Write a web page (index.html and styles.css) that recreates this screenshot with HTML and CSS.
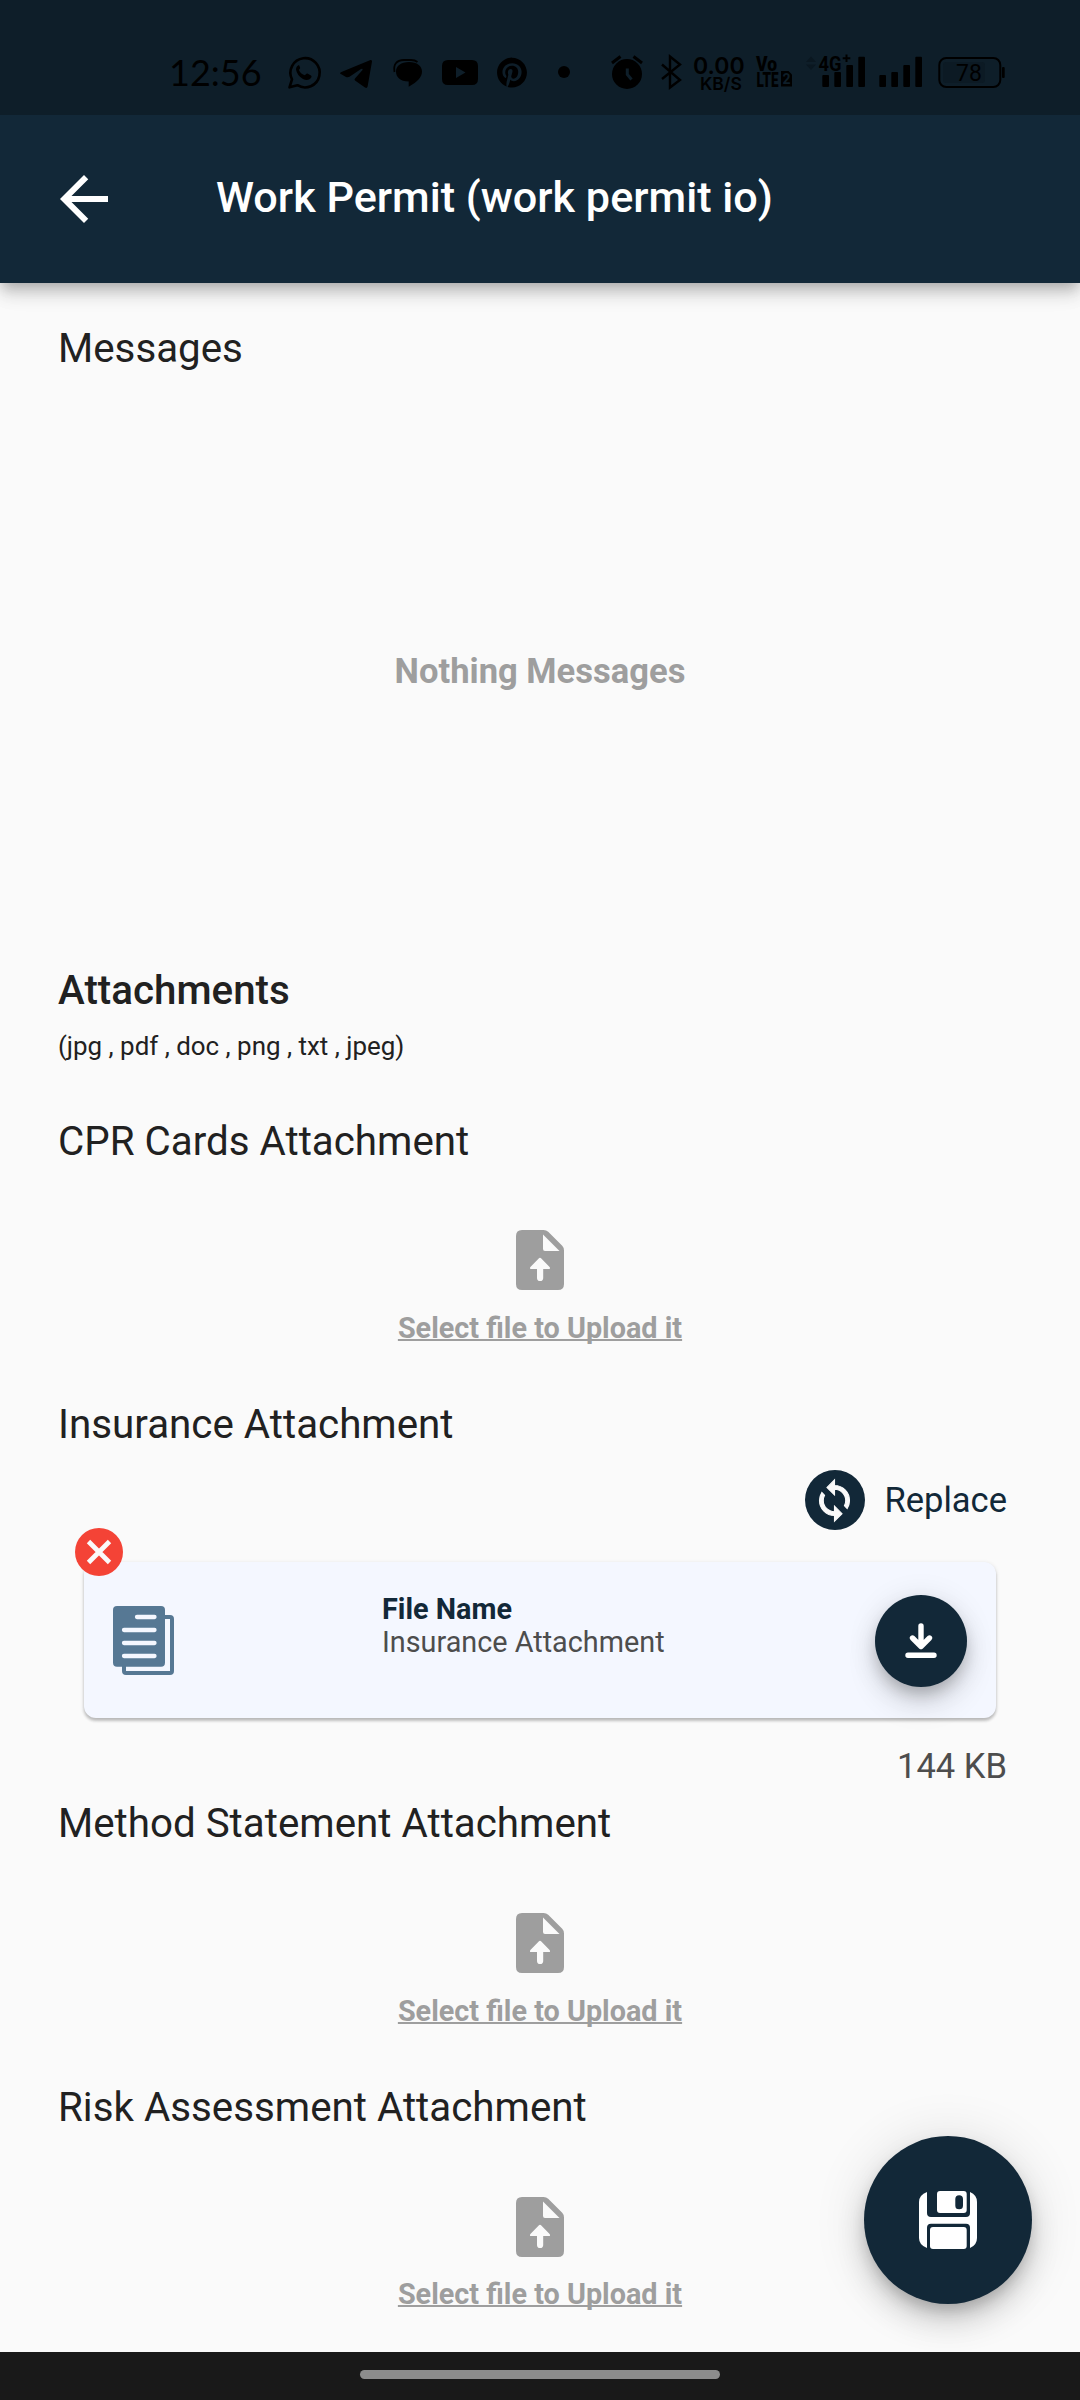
FILE: index.html
```
<!DOCTYPE html>
<html lang="en">
<head>
<meta charset="utf-8">
<title>Work Permit</title>
<link rel="stylesheet" href="styles.css">
</head>
<body>
<svg class="defs" width="0" height="0">
  <symbol id="upload" viewBox="0 0 48 60">
    <path fill="#9e9e9e" d="M6 0H27.5Q30.4 0 32.2 1.8L46.2 15.8Q48 17.6 48 20.5V54Q48 60 42 60H6Q0 60 0 54V6Q0 0 6 0Z"/>
    <path fill="#fafafa" d="M27 4.5L43.5 21H29Q27 21 27 19ZM22.7 28.4Q24 27 25.3 28.4L33.6 37Q34.8 39 33 39H27.2V48A3.1 3.1 0 0 1 21 48V39H15Q13.2 39 14.4 37Z"/>
  </symbol>
</svg>
<div class="screen">
  <div class="status">
    <span class="clock">12:56</span>
    <svg class="notifications" viewBox="280 50 300 45">
      <path d="M289.5 87.3L292 79.3A14.6 14.6 0 1 1 297.4 85.2Z" fill="none" stroke="#000" stroke-width="2.6" stroke-linejoin="round"/>
      <path d="M299 65q-3 1-3 4.500q1 6 7 9.500q5 2.500 8-1q1.200-1.700 0-2.500l-3.600-2q-1-.4-2.500 1.800q-4-1-6-5.300q1.600-1.600 1.200-2.500l-1.100-2.500Z"/>
      <path d="M340 73.500Q340 72.500 342 71.700L370.500 60Q372.300 59.700 372 61.500L367.600 86.500Q367 88.600 365 87.500L355 80.500Q354 79.500 355 78.500L362.500 70Q363 68 361 69L349.500 76.800Q348 77.500 346 77Z"/>
      <path d="M409 62C417 62 422 66 422 71.500C422 77 418 81.500 408.700 86.700V81.500C400 81.500 396 77 396 71.500C396 66 401 62 409 62Z"/>
      <path d="M394.500 72Q392.500 60.500 404 60H411Q415 60 417.500 62" fill="none" stroke="#000" stroke-width="1.800"/>
      <path fill-rule="evenodd" d="M448 60H472Q478 60 478 66V79Q478 85 472 85H448Q442 85 442 79V66Q442 60 448 60ZM456 67V78L465.500 72.500Z"/>
      <path transform="translate(497 57.600) scale(1.250)" d="M12.017 0C5.396 0 .029 5.367.029 11.987c0 5.079 3.158 9.417 7.618 11.162-.105-.949-.199-2.403.041-3.439.219-.937 1.406-5.957 1.406-5.957s-.359-.72-.359-1.781c0-1.663.967-2.911 2.168-2.911 1.024 0 1.518.769 1.518 1.688 0 1.029-.653 2.567-.992 3.992-.285 1.193.6 2.165 1.775 2.165 2.128 0 3.768-2.245 3.768-5.487 0-2.861-2.063-4.869-5.008-4.869-3.41 0-5.409 2.562-5.409 5.199 0 1.033.394 2.143.889 2.741.099.12.112.225.085.345-.09.375-.293 1.199-.334 1.363-.053.225-.172.271-.401.165-1.495-.69-2.433-2.878-2.433-4.646 0-3.776 2.748-7.252 7.92-7.252 4.158 0 7.392 2.967 7.392 6.923 0 4.135-2.607 7.462-6.233 7.462-1.214 0-2.354-.629-2.758-1.379l-.749 2.848c-.269 1.045-1.004 2.352-1.498 3.146 1.123.345 2.306.535 3.55.535 6.607 0 11.985-5.365 11.985-11.987C23.97 5.39 18.592.026 11.985.026L12.017 0z"/>
      <circle cx="564" cy="72" r="6"/>
    </svg>
    <svg class="system" viewBox="605 50 405 45">
      <circle cx="627" cy="74" r="15"/>
      <path d="M612 63L620.500 56.500M633.500 56.500L642 63" fill="none" stroke="#000" stroke-width="3"/>
      <path d="M627.300 68.500V74.500L631.500 79.500" fill="none" stroke="#0e1e29" stroke-width="3"/>
      <path d="M662 64.500L680 80L670 87.500V56.500L680 64.500L662 79" fill="none" stroke="#000" stroke-width="2.400"/>
      <text class="rate" x="693" y="73.500">0.00</text>
      <text class="unit" x="700" y="90.300">KB/S</text>
      <text class="lte" x="756" y="71" textLength="21" lengthAdjust="spacingAndGlyphs">Vo</text>
      <text class="lte" x="756.500" y="86.500" textLength="22" lengthAdjust="spacingAndGlyphs">LTE</text>
      <path d="M781 71H788.500L792 74.500V86.500H781Z"/>
      <text class="sim" x="782.500" y="84">2</text>
      <path d="M806 62L811 56.500L816 62ZM806 64.500L811 70L816 64.500Z" fill="#0a1720"/>
      <text class="net" x="818.500" y="70.500" textLength="23" lengthAdjust="spacingAndGlyphs">4G</text>
      <path d="M846.500 54.500V62M842.700 58.300H850.300" stroke="#000" stroke-width="2"/>
      <g>
        <rect x="822.300" y="75" width="6.700" height="12" rx="1"/><rect x="834.300" y="72" width="6.700" height="15" rx="1"/><rect x="846.300" y="65" width="6.700" height="22" rx="1"/><rect x="858.300" y="56.700" width="6.700" height="30.300" rx="1"/>
        <rect x="879.300" y="75" width="6.700" height="12" rx="1"/><rect x="891.300" y="72" width="6.700" height="15" rx="1"/><rect x="903.300" y="65" width="6.700" height="22" rx="1"/><rect x="915.300" y="56.700" width="6.700" height="30.300" rx="1"/>
      </g>
      <rect x="943" y="62" width="42" height="21" rx="3" fill="#0c1a24"/>
      <rect x="939.300" y="58" width="61" height="29" rx="7" fill="none" stroke="#000" stroke-width="2"/>
      <rect x="1002" y="67" width="2.700" height="11" rx="1"/>
      <text class="charge" x="956" y="81">78</text>
    </svg>
  </div>
  <header class="appbar">
    <svg class="back" viewBox="0 0 24 24"><path fill="#fff" d="M20 11H7.830l5.590-5.590L12 4l-8 8 8 8 1.410-1.410L7.830 13H20v-2z"/></svg>
    <h1>Work Permit (work permit io)</h1>
  </header>
  <main>
    <h2>Messages</h2>
    <div class="empty">Nothing Messages</div>
    <h2 class="strong">Attachments</h2>
    <p class="types">(jpg , pdf , doc , png , txt , jpeg)</p>
    <section>
      <h2>CPR Cards Attachment</h2>
      <div class="upload first"><svg><use href="#upload"/></svg><span>Select file to Upload it</span></div>
    </section>
    <section>
      <h2>Insurance Attachment</h2>
      <div class="replace">
        <span class="sync"><svg viewBox="0 0 24 24"><path fill="#fafafa" stroke="#fafafa" stroke-width=".6" d="M12 4V1L8 5l4 4V6c3.310 0 6 2.690 6 6 0 1.010-.250 1.970-.700 2.800l1.460 1.460C19.540 15.030 20 13.570 20 12c0-4.420-3.580-8-8-8zm0 14c-3.310 0-6-2.690-6-6 0-1.010.250-1.970.700-2.800L5.240 7.740C4.460 8.970 4 10.430 4 12c0 4.420 3.580 8 8 8v3l4-4-4-4v3z"/></svg></span>
        <span>Replace</span>
      </div>
      <div class="card">
        <svg class="remove" viewBox="0 0 48 48"><circle cx="24" cy="24" r="24" fill="#f44336"/><path d="M13.500 13.500L34.500 34.500M34.500 13.500L13.500 34.500" stroke="#fafafa" stroke-width="4.800"/></svg>
        <svg class="doc" viewBox="0 0 61 69">
          <rect x="11" y="11" width="48" height="56" rx="2" fill="#f4f7ff" stroke="#567894" stroke-width="4"/>
          <rect width="52" height="60.700" rx="4" fill="#567894"/>
          <path d="M24 11H41.500M11 24H41.500M11 37H41.500M11 50H41.500" stroke="#f4f7ff" stroke-width="4.300" stroke-linecap="round"/>
        </svg>
        <div class="info"><b>File Name</b><span>Insurance Attachment</span></div>
        <svg class="download" viewBox="0 0 92 92"><path d="M46 31V51M37.500 43L46 51.500L54.500 43M33 60.300H59" fill="none" stroke="#fff" stroke-width="5.400" stroke-linecap="round" stroke-linejoin="round"/></svg>
      </div>
      <div class="size">144 KB</div>
    </section>
    <section>
      <h2>Method Statement Attachment</h2>
      <div class="upload second"><svg><use href="#upload"/></svg><span>Select file to Upload it</span></div>
    </section>
    <section>
      <h2>Risk Assessment Attachment</h2>
      <div class="upload third"><svg><use href="#upload"/></svg><span>Select file to Upload it</span></div>
    </section>
  </main>
  <div class="fab">
    <svg viewBox="0 0 58 58" fill="#fff">
      <path d="M8 1V22Q8 26 12 26H47Q51 26 51 22V1Q58 4 58 11V47Q58 54 51 57V36.700Q51 32.700 47 32.700H12Q8 32.700 8 36.700V57Q0 54 0 47V11Q0 4 8 1Z"/>
      <path fill-rule="evenodd" d="M21 0H44.700Q47.700 0 47.700 3V19Q47.700 22 44.700 22H21Q18 22 18 19V3Q18 0 21 0ZM36.300 8V14.500A3.850 3.850 0 0 0 44 14.500V8A3.850 3.850 0 0 0 36.300 8Z"/>
      <rect x="11" y="36" width="36.700" height="22" rx="3"/>
    </svg>
  </div>
  <nav><i></i></nav>
</div>
</body>
</html>
```
FILE: styles.css
```
* { box-sizing: border-box; }
body { margin: 0; font-family: Roboto, sans-serif; }
h1, h2, p { margin: 0; }
svg { display: block; flex: none; }
.defs { position: absolute; }
.screen {
  position: relative;
  width: 1080px;
  height: 2400px;
  display: flex;
  flex-direction: column;
  overflow: hidden;
  background: #fafafa;
  color: #212121;
}

/* System status bar */
.status {
  flex: none;
  height: 115px;
  padding: 50px 70px 0 169px;
  display: flex;
  background: #0e1e29;
  color: #000;
  position: relative;
  z-index: 2;
}
.clock { width: 111px; font: 36px/45px Lato, sans-serif; }
.notifications { width: 300px; height: 45px; }
.system { width: 405px; height: 45px; margin-left: 25px; }
.rate { font: 600 23px Inter, sans-serif; }
.unit { font: 600 17.500px Inter, sans-serif; }
.lte { font: 900 19.500px Roboto, sans-serif; }
.sim { font: 700 14px Roboto, sans-serif; fill: #0e1e29; }
.net { font: 700 20px Roboto, sans-serif; }
.charge { font: 23px Roboto, sans-serif; }

.appbar {
  flex: none;
  height: 168px;
  padding-left: 48px;
  display: flex;
  align-items: center;
  background: #122838;
  color: #fff;
  position: relative;
  z-index: 1;
  box-shadow: 0 6px 12px -3px rgba(0,0,0,.2), 0 12px 15px rgba(0,0,0,.12), 0 3px 30px rgba(0,0,0,.08);
}
.back { width: 72px; height: 72px; }
h1 { margin: -3px 0 0 96px; font-size: 43.2px; line-height: 51px; font-weight: 500; }

main { flex: 1; min-height: 0; padding: 42px 73px 0 58px; }
h2 { font-size: 40.32px; line-height: 47px; font-weight: 400; }
h2.strong { font-weight: 500; }
.empty {
  height: 595px;
  padding: 3px 0 0 15px;
  display: flex;
  align-items: center;
  justify-content: center;
  font-size: 34.56px;
  font-weight: 700;
  color: #9e9e9e;
}
.types { padding: 17px 0 57px; font-size: 25.92px; line-height: 30px; }
.upload {
  padding: 65px 0 56px 15px;
  display: flex;
  flex-direction: column;
  align-items: center;
  gap: 21px;
  color: #9e9e9e;
  font-size: 28.8px;
  font-weight: 700;
  line-height: 34px;
}
.upload.second { padding-top: 66px; }
.upload.third { padding-top: 66px; gap: 20px; }
.upload svg { width: 48px; height: 60px; }
.upload span { text-decoration: underline; text-decoration-thickness: 2px; text-underline-offset: 1px; text-decoration-skip-ink: none; }

.replace {
  margin-top: 22px;
  display: flex;
  align-items: center;
  justify-content: flex-end;
  gap: 19.5px;
  color: #122838;
  font-size: 34.56px;
  line-height: 40px;
}
.sync {
  width: 60px;
  height: 60px;
  border-radius: 50%;
  display: flex;
  align-items: center;
  justify-content: center;
  background: #122838;
}
.sync svg { width: 45px; height: 45px; }
.card {
  position: relative;
  width: 912px;
  height: 156px;
  margin: 32px 0 28px 26px;
  padding: 1px 29px 0;
  display: flex;
  align-items: center;
  border-radius: 12px;
  background: #f4f7ff;
  box-shadow: 0 3px 3px rgba(0,0,0,.2), 0 1px 4px rgba(0,0,0,.12);
}
.remove { position: absolute; left: -9px; top: -34px; width: 48px; height: 48px; }
.doc { width: 61px; height: 69px; }
.info {
  align-self: flex-start;
  margin: 30px auto 0 208px;
  display: flex;
  flex-direction: column;
  font-size: 28.8px;
  line-height: 33px;
  color: #4d4d4d;
}
.info b { color: #122838; }
.download {
  width: 92px;
  height: 92px;
  border-radius: 50%;
  background: #122838;
  box-shadow: 0 9px 15px -3px rgba(0,0,0,.2), 0 18px 30px rgba(0,0,0,.12), 0 3px 30px rgba(0,0,0,.1);
}
.size { margin-bottom: 14px; text-align: right; font-size: 34.56px; line-height: 40px; color: #4d4d4d; }

/* Floating save button */
.fab {
  position: absolute;
  left: 864px;
  top: 2136px;
  width: 168px;
  height: 168px;
  border-radius: 50%;
  display: flex;
  align-items: center;
  justify-content: center;
  background: #122838;
  box-shadow: 0 9px 15px -3px rgba(0,0,0,.2), 0 18px 30px rgba(0,0,0,.14), 0 3px 54px rgba(0,0,0,.12);
}
.fab svg { width: 58px; height: 58px; }
nav {
  flex: none;
  height: 48px;
  display: flex;
  align-items: center;
  justify-content: center;
  background: #191919;
  position: relative;
  z-index: 1;
}
nav i { width: 360px; height: 9px; margin-top: -3px; border-radius: 5px; background: #8c8c8c; }
```
